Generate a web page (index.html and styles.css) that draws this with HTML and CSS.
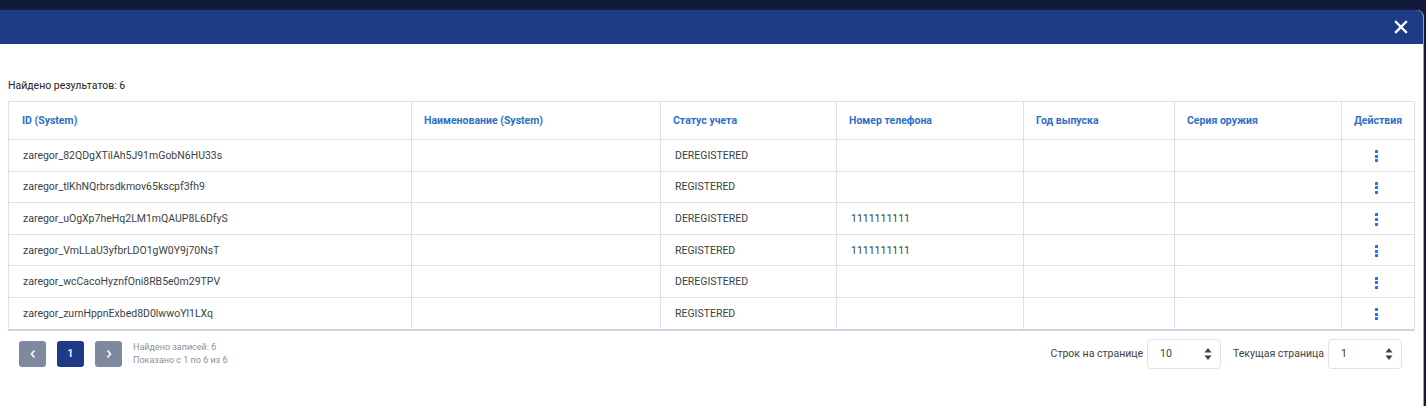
FILE: index.html
```html
<!DOCTYPE html>
<html lang="ru">
<head>
<meta charset="utf-8">
<link rel="stylesheet" href="styles.css">
</head>
<body>
<div class="backdrop">
  <div class="modal">
    <div class="modal-header">
      <button class="close" aria-label="close">
        <svg width="14" height="14" viewBox="0 0 14 14"><path d="M2 2L12 12M12 2L2 12" stroke="#fff" stroke-width="2.4" stroke-linecap="square"/></svg>
      </button>
    </div>
    <div class="modal-body">
      <div class="found">Найдено результатов: 6</div>
      <table class="grid">
        <colgroup>
          <col style="width:403px"><col style="width:249px"><col style="width:176px"><col style="width:187px"><col style="width:151px"><col style="width:167px"><col style="width:73px">
        </colgroup>
        <thead>
          <tr>
            <th>ID (System)</th>
            <th>Наименование (System)</th>
            <th>Статус учета</th>
            <th>Номер телефона</th>
            <th>Год выпуска</th>
            <th>Серия оружия</th>
            <th class="act">Действия</th>
          </tr>
        </thead>
        <tbody>
          <tr><td>zaregor_82QDgXTilAh5J91mGobN6HU33s</td><td></td><td>DEREGISTERED</td><td></td><td></td><td></td><td class="act"><span class="kebab"><i></i><i></i><i></i></span></td></tr>
          <tr><td>zaregor_tlKhNQrbrsdkmov65kscpf3fh9</td><td></td><td>REGISTERED</td><td></td><td></td><td></td><td class="act"><span class="kebab"><i></i><i></i><i></i></span></td></tr>
          <tr><td>zaregor_uOgXp7heHq2LM1mQAUP8L6DfyS</td><td></td><td>DEREGISTERED</td><td>1111111111</td><td></td><td></td><td class="act"><span class="kebab"><i></i><i></i><i></i></span></td></tr>
          <tr><td>zaregor_VmLLaU3yfbrLDO1gW0Y9j70NsT</td><td></td><td>REGISTERED</td><td>1111111111</td><td></td><td></td><td class="act"><span class="kebab"><i></i><i></i><i></i></span></td></tr>
          <tr><td>zaregor_wcCacoHyznfOni8RB5e0m29TPV</td><td></td><td>DEREGISTERED</td><td></td><td></td><td></td><td class="act"><span class="kebab"><i></i><i></i><i></i></span></td></tr>
          <tr><td>zaregor_zurnHppnExbed8D0lwwoYl1LXq</td><td></td><td>REGISTERED</td><td></td><td></td><td></td><td class="act"><span class="kebab"><i></i><i></i><i></i></span></td></tr>
        </tbody>
      </table>
      <div class="pager">
        <div class="pager-left">
          <button class="pbtn nav"><svg width="8" height="10" viewBox="0 0 8 10"><path d="M5.5 1.5L2.5 5L5.5 8.5" fill="none" stroke="#fff" stroke-width="1.6"/></svg></button>
          <button class="pbtn active">1</button>
          <button class="pbtn nav"><svg width="8" height="10" viewBox="0 0 8 10"><path d="M2.5 1.5L5.5 5L2.5 8.5" fill="none" stroke="#fff" stroke-width="1.6"/></svg></button>
          <div class="pinfo">
            <div>Найдено записей: 6</div>
            <div>Показано с 1 по 6 из 6</div>
          </div>
        </div>
        <div class="pager-right">
          <span class="plabel">Строк на странице</span>
          <div class="spin"><span>10</span><span class="arrows"><svg width="8" height="14" viewBox="0 0 8 14"><path d="M4 1L7.5 5.5H0.5Z M4 13L7.5 8.5H0.5Z" fill="#3a4150"/></svg></span></div>
          <span class="plabel">Текущая страница</span>
          <div class="spin"><span>1</span><span class="arrows"><svg width="8" height="14" viewBox="0 0 8 14"><path d="M4 1L7.5 5.5H0.5Z M4 13L7.5 8.5H0.5Z" fill="#3a4150"/></svg></span></div>
        </div>
      </div>
    </div>
  </div>
</div>
</body>
</html>
```

FILE: styles.css
```css
html, body {
  margin: 0;
  padding: 0;
  background: #ffffff;
  font-family: Roboto, "Liberation Sans", Arial, sans-serif;
  width: 1426px;
  height: 406px;
  overflow: hidden;
}

.backdrop {
  background: #111a38;
  padding-top: 10px;
  height: 396px;
  width: 1426px;
}

.modal {
  width: 1424px;
  height: 396px;
  background: #ffffff;
  border-top-right-radius: 7px;
  overflow: hidden;
  box-sizing: border-box;
  border-right: 1px solid #9aa0ac;
}

.modal-header {
  height: 34px;
  background: #1f3a87;
  display: flex;
  justify-content: flex-end;
  align-items: center;
  padding-right: 15px;
}

.close {
  background: none;
  border: none;
  padding: 0;
  width: 14px;
  height: 14px;
  display: flex;
  align-items: center;
  justify-content: center;
  cursor: pointer;
}

.modal-body {
  padding: 0 0 0 8px;
}

.found {
  font-size: 10.5px;
  color: #222;
  padding-top: 35px;
  height: 22px;
  line-height: 13px;
}

.grid {
  border-collapse: collapse;
  table-layout: fixed;
  width: 1406px;
  font-size: 10.5px;
  border: 1px solid #dcdfee;
  border-bottom: 2px solid #cfd3e6;
}

.grid th {
  height: 38px;
  text-align: left;
  color: #2f6fc8;
  font-weight: 700;
  padding: 0 12px 0 13px;
  border: 1px solid #dcdfee;
  box-sizing: border-box;
  vertical-align: middle;
  font-size: 10.5px;
}

.grid th:first-child { padding-left: 13px; }
.grid th + th { padding-left: 12px; }

.grid td {
  height: 30.6px;
  padding: 0 14px;
  border: 1px solid #dcdfee;
  color: #3a3f48;
  white-space: nowrap;
  overflow: hidden;
  vertical-align: middle;
}

.grid .act {
  text-align: center;
  padding: 0 4px;
}

.grid th.act { padding: 0 4px; }

.kebab {
  display: inline-flex;
  flex-direction: column;
  gap: 1.6px;
  vertical-align: middle;
  padding-top: 2px;
  margin-left: -4px;
}

.kebab i {
  display: block;
  width: 3px;
  height: 3px;
  background: #1f74e6;
  border-radius: 0.5px;
}

.pager {
  display: flex;
  justify-content: space-between;
  align-items: flex-start;
  width: 1383px;
  padding: 8px 0 0 11px;
}

.pager-left {
  display: flex;
  align-items: center;
  gap: 11px;
  margin-top: 2px;
}

.pbtn {
  width: 27px;
  height: 26px;
  border: none;
  border-radius: 3px;
  color: #fff;
  font-family: Roboto, "Liberation Sans", Arial, sans-serif;
  font-size: 11px;
  font-weight: 500;
  display: flex;
  align-items: center;
  justify-content: center;
  padding: 0;
}

.pbtn.nav { background: #7e889f; }
.pbtn.active { background: #1f3a87; }

.pinfo {
  font-size: 9px;
  color: #8b909c;
  line-height: 13px;
}

.pager-right {
  display: flex;
  align-items: center;
  gap: 4px;
}

.plabel {
  font-size: 10.5px;
  color: #3a3f48;
}

.spin {
  width: 74px;
  height: 30px;
  box-sizing: border-box;
  border: 1px solid #dfe2ea;
  border-radius: 4px;
  display: flex;
  align-items: center;
  justify-content: space-between;
  padding: 0 8px 0 12px;
  font-size: 10.5px;
  color: #3a3f48;
  margin-right: 8px;
}

.spin:last-child { margin-right: 0; }

.arrows { display: flex; }
```
